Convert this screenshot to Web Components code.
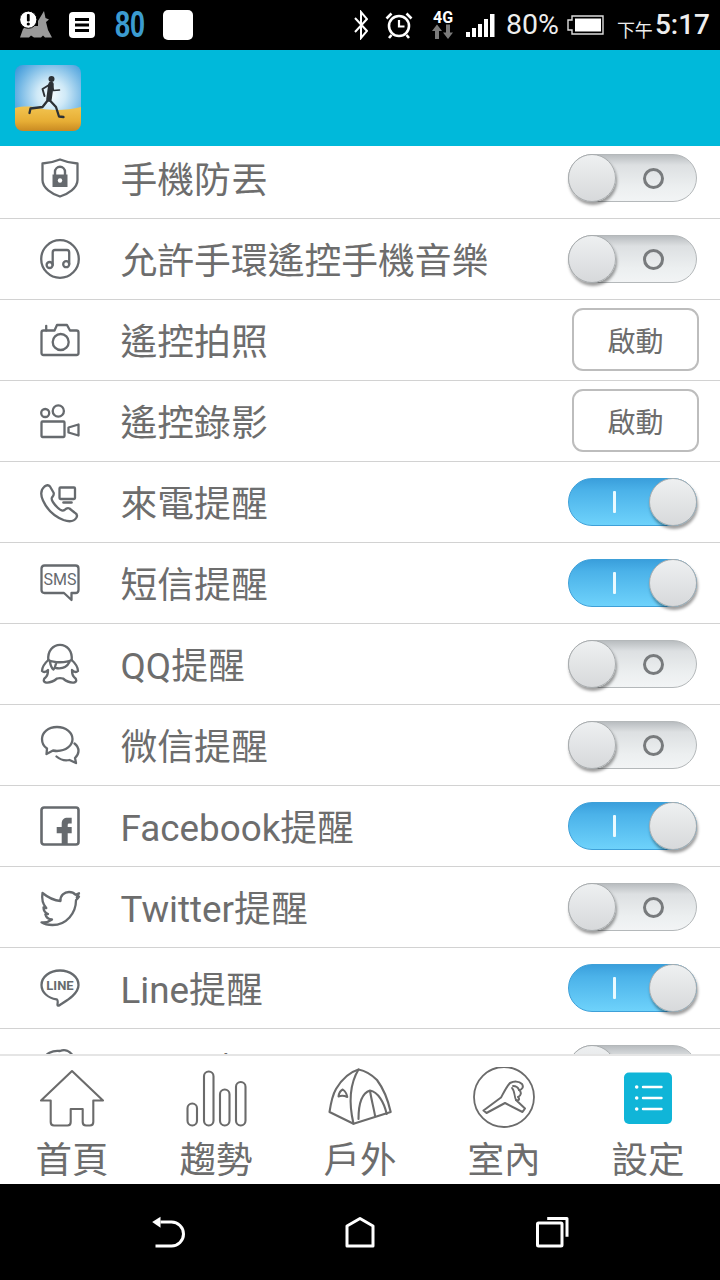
<!DOCTYPE html>
<html lang="zh-Hant">
<head>
<meta charset="utf-8">
<title>設定</title>
<style>
  html, body { margin: 0; padding: 0; background: #fff; }
  body {
    width: 720px;
    height: 1280px;
    overflow: hidden;
    display: flex;
    flex-direction: column;
    font-family: Roboto, "Noto Sans CJK TC", sans-serif;
    color: #6d6d6d;
  }
</style>
</head>
<body>
  <status-bar></status-bar>
  <app-bar></app-bar>
  <setting-list>
    <setting-row icon="shield" label="手機防丟"><toggle-switch></toggle-switch></setting-row>
    <setting-row icon="music" label="允許手環遙控手機音樂"><toggle-switch></toggle-switch></setting-row>
    <setting-row icon="camera" label="遙控拍照"><action-button>啟動</action-button></setting-row>
    <setting-row icon="video" label="遙控錄影"><action-button>啟動</action-button></setting-row>
    <setting-row icon="phone" label="來電提醒"><toggle-switch on></toggle-switch></setting-row>
    <setting-row icon="sms" label="短信提醒"><toggle-switch on></toggle-switch></setting-row>
    <setting-row icon="qq" label="QQ提醒"><toggle-switch></toggle-switch></setting-row>
    <setting-row icon="wechat" label="微信提醒"><toggle-switch></toggle-switch></setting-row>
    <setting-row icon="facebook" label="Facebook提醒"><toggle-switch on></toggle-switch></setting-row>
    <setting-row icon="twitter" label="Twitter提醒"><toggle-switch></toggle-switch></setting-row>
    <setting-row icon="line" label="Line提醒"><toggle-switch on></toggle-switch></setting-row>
    <setting-row icon="skype" label="Skype提醒"><toggle-switch></toggle-switch></setting-row>
  </setting-list>
  <tab-bar>
    <tab-item icon="home" label="首頁"></tab-item>
    <tab-item icon="trend" label="趨勢"></tab-item>
    <tab-item icon="tent" label="戶外"></tab-item>
    <tab-item icon="indoor" label="室內"></tab-item>
    <tab-item icon="settings" label="設定"></tab-item>
  </tab-bar>
  <nav-bar></nav-bar>

<script>
// row icons: 40x40 box, outline drawn with currentColor
const ROW_ICONS = {
  shield: `<path d="M20 1.5C26 4 32 5.2 37.5 5.5V22C37.5 30 28 36 20 38.5C12 36 2.5 30 2.5 22V5.5C8 5.2 14 4 20 1.5Z"/>
    <path d="M15 17v-3.2a5 5 0 0 1 10 0V17" stroke-width="2.4"/>
    <path d="M12.5 16.5h15v12.5h-15z" fill="currentColor" stroke="none"/>
    <circle cx="20" cy="22.5" r="2.2" fill="#fff" stroke="none"/>`,
  music: `<circle cx="20" cy="20" r="18.8"/>
    <path d="M12.7 26V13.5Q12.7 11 15 11H27Q29.2 11 29.2 13.5V25"/>
    <circle cx="9.6" cy="26" r="3"/><circle cx="26.2" cy="25.2" r="3"/>`,
  camera: `<path d="M3.5 10.5H14.5L17 5H27L30 10.5H36.5Q38.5 10.5 38.5 12.5V33Q38.5 35 36.5 35H3.5Q1.5 35 1.5 33V12.5Q1.5 10.5 3.5 10.5Z"/>
    <circle cx="20.7" cy="22" r="8"/><path d="M6.2 5.8V10.5"/>`,
  video: `<circle cx="5.2" cy="12" r="4"/><circle cx="18.3" cy="10" r="5.6"/>
    <rect x="1.5" y="20.5" width="23" height="15.5" rx="1"/><path d="M28.5 26.5L38.5 23.5V34.5L28.5 31.5Z"/>`,
  phone: `<path d="M4.5 4.5C1 7.5 .5 13 3 18.5C7 27.5 14.5 34.5 23.5 38C29 40 34 39.5 36.5 35.5C37.5 33.5 36.5 31.5 34.5 30.5L29.5 26.5C27.5 25.5 26.5 26 24.5 28C22.5 29.5 20.5 28.5 17.5 25.5C14 22 10.5 18 12 15.5C13.5 13.5 14.5 12.5 13.5 10.5L10 4.5C8.5 2.5 6.5 3 4.5 4.5Z"/>
    <rect x="19.5" y="5.5" width="15.5" height="11.5" rx="1"/><path d="M23.5 20.5H31.5" stroke-width="2.6"/>`,
  sms: `<path d="M4.5 2.5H35.5Q38.5 2.5 38.5 5.5V27Q38.5 30 35.5 30H31.5V37L24 30H4.5Q1.5 30 1.5 27V5.5Q1.5 2.5 4.5 2.5Z"/>
    <text x="20" y="22" text-anchor="middle" font-size="16" fill="currentColor" stroke="none" font-family="Roboto, sans-serif">SMS</text>`,
  qq: `<path d="M8.3 16C7.5 7 13 .8 20 .8C27 .8 32.5 7 31.7 16"/>
    <path d="M8.3 16C5 19 2 23 2 27C4 29 6 28 8 26C8 29 8 31 6 33C3 35 3 38 6 38.5C10 39 14 37 17 34.5C19 34 21 34 23 34.5C26 37 30 39 34 38.5C37 38 37 35 34 33C32 31 32 29 32 26C34 28 36 29 38 27C38 23 35 19 31.7 16"/>
    <path d="M8.3 16C14 19 26 19 31.7 16M10 18C10.5 21 11.5 24 13.5 25.5C15 24 15.5 22 16 19.5M29.5 18C27 23 22 25 16 24"/>`,
  wechat: `<path d="M17 2C8 2 2 7.5 2 14C2 18 4 21.5 7 23.5L6.5 29L13 25.5C14 25.7 15.5 26 17 26C26 26 32.5 20.5 32.5 14C32.5 7.5 26 2 17 2Z"/>
    <path d="M34.5 18.5C37 20.5 38.5 23 38.5 26C38.5 29 37 31 35 33L36 38L29.5 35C25 36 20 34.5 16.5 31.5"/>`,
  facebook: `<rect x="1.5" y="1.5" width="37" height="37" rx="2.5" stroke-width="2.6"/>
    <path d="M21.7 38V17.5C21.7 13.5 24 11.7 27.5 11.7H31.7V17.5H29.5C28 17.5 27.7 18 27.7 19.5V21H31.7V27.3H27.7V38ZM16.7 21H22V27.3H16.7Z" fill="currentColor" stroke="none"/>`,
  twitter: `<path d="M2.5 6C8 10.5 14 13.5 20.5 14C20 8.5 24.5 5 29 5C32 5 34 6 35.5 7.8L39 6.2L36.8 10.2L39 9.7C38 11.2 37 12.3 36 13.2C36 26 26.5 38 12.5 38C8.5 38 4.5 37.3 1.5 35.3C5 35.7 9 34.8 12 32.5C8.5 32.3 6 30.3 5.3 27.3L8 27C5.5 26 3.5 23.5 3.5 20.5L6.3 21C3.5 18 1.5 12 2.5 6Z"/>`,
  line: `<path d="M20 2.5C9.5 2.5 1.5 9 1.5 17C1.5 24.5 8 30 16.5 31.3C18 31.6 18 33 17.5 36.5C17.4 37.8 18.3 38 19.5 37.2C25 33.5 38.5 26.5 38.5 17C38.5 9 30.5 2.5 20 2.5Z"/>
    <text x="20" y="21.5" text-anchor="middle" font-size="13" font-weight="700" fill="currentColor" stroke="none" font-family="Roboto, sans-serif">LINE</text>`,
  skype: `<path d="M2 13C5 4 13 1 20 2C25 0 30 2 33 7C37 11 38 16 37 22"/>`
};

// tab icons are drawn in page coordinates, the viewBox picks the window
const TAB_ICONS = {
  home: `<svg viewBox="32 1067 80 62"><path d="M72 1071L41 1100.5H50.7V1122Q50.7 1125.5 54 1125.5H67.5Q70.7 1125.5 70.7 1122V1109H82.7V1122Q82.7 1125.5 86 1125.5H90Q93.3 1125.5 93.3 1122V1100.5H103Z"/></svg>`,
  trend: `<svg viewBox="176 1067 80 62"><rect x="187.5" y="1103.5" width="9.5" height="22" rx="4.7"/><rect x="204" y="1071.5" width="9.5" height="54" rx="4.7"/><rect x="220" y="1089.5" width="9.5" height="36" rx="4.7"/><rect x="236" y="1082" width="9.5" height="43.5" rx="4.7"/></svg>`,
  tent: `<svg viewBox="320 1067 80 62"><path d="M329.5 1112C331 1102 332.5 1095 336 1089C342 1079 350 1072 358.5 1069.5C366 1071 372 1075 377 1080C383 1088 388 1100 390.7 1112L353.5 1123.7Z"/>
    <path d="M358.5 1069.5C351 1082 348 1100 353.5 1123.7M358.5 1119C358.5 1104 362 1093 370 1090.5C378 1092 384 1102 386.7 1114M370 1090.5C371 1098 373.5 1107 375 1115.5"/>
    <path d="M338.5 1096.5C339 1093 340.5 1090.5 342.7 1089.5C345 1091 346.8 1094 347.3 1097C344 1095.5 341 1095.5 338.5 1096.5Z" stroke-width="2"/></svg>`,
  indoor: `<svg viewBox="464 1067 80 62"><circle cx="504" cy="1097" r="30" stroke-width="1.8"/>
    <path d="M483.5 1110.5L501 1097.5C504 1092 507 1086 510 1083C514 1081 519 1081 522 1084C524 1087 522 1090 519 1090C522 1092 521 1096 518 1097C520 1099 519 1101 516 1100L525 1108.5L522.5 1112L505 1103L486.5 1113Z" stroke-width="2"/>
    <path d="M512 1088C515 1091 514 1096 516 1100M513 1086C516 1086 518 1087 519 1090" stroke-width="1.8"/></svg>`,
  settings: `<svg viewBox="608 1067 80 62"><rect x="624" y="1072.5" width="48" height="51.5" rx="5" fill="#10b5d8" stroke="none"/>
    <g fill="#fff" stroke="none"><circle cx="636.7" cy="1087" r="1.8"/><circle cx="636.7" cy="1098" r="1.8"/><circle cx="636.7" cy="1109" r="1.8"/></g>
    <path d="M643 1087H661.5M643 1098H661.5M643 1109H661.5" stroke="#fff" stroke-width="2.4"/></svg>`
};

class StatusBar extends HTMLElement {
  constructor() {
    super();
    this.attachShadow({ mode: 'open' });
    this.shadowRoot.innerHTML = `
      <style>
        :host { display: flex; align-items: center; flex: none; height: 50px; background: #000; color: #fff; padding: 0 10px 0 20px; box-sizing: border-box; font-family: Roboto, "Noto Sans CJK TC", sans-serif; }
        svg { display: block; flex: none; }
        .count { margin-left: 20px; width: 30px; font: 700 37px/50px "Liberation Sans", sans-serif; color: #3b9bd0; letter-spacing: 0; transform: scaleX(.73); transform-origin: left center; white-space: nowrap; }
        .square { margin-left: 18px; width: 30px; height: 30px; background: #fff; border-radius: 5px; flex: none; }
        .right { margin-left: auto; display: flex; align-items: center; height: 50px; }
        .pct { margin-left: 11px; font-size: 28.5px; line-height: 50px; color: #eee; }
        .ampm { margin-left: 13px; font-size: 18px; line-height: 50px; padding-top: 6px; color: #eee; box-sizing: border-box; height: 50px; }
        .time { margin-left: 2px; font-size: 28px; font-weight: 500; line-height: 50px; color: #eee; }
      </style>
      <svg width="32" height="32" viewBox="20 10 32 32">
        <path d="M20 38.5L23 30L26 27H38V22L44 12L45.5 19L49 20.5L46 23L48 31L52 38.5H45L43 36.5L41 38.5H34L31 36.5L29 38.5Z" fill="#9a9a9a"/>
        <circle cx="28.3" cy="20.7" r="8.6" fill="#fff" stroke="#000" stroke-width="1"/>
        <rect x="26.9" y="15" width="2.8" height="7.5" rx="1" fill="#000"/><circle cx="28.3" cy="25" r="1.6" fill="#000"/>
      </svg>
      <svg style="margin-left:17px" width="26" height="26" viewBox="0 0 26 26">
        <rect width="26" height="26" rx="4" fill="#fff"/>
        <path d="M6 7.5H20M6 13H20M6 18.5H20" stroke="#000" stroke-width="3"/>
      </svg>
      <div class="count">80</div>
      <div class="square"></div>
      <div class="right">
        <svg width="14" height="30" viewBox="0 0 14 30" fill="none" stroke="#fff" stroke-width="2"><path d="M1 8L13 21L7 28V2L13 9L1 22"/></svg>
        <svg style="margin-left:17px" width="28" height="28" viewBox="0 0 28 28" fill="none" stroke="#fff" stroke-width="2.6">
          <circle cx="14" cy="15" r="10"/><path d="M14 9V15.5H19.5" stroke-width="2.2"/><path d="M1.5 7.5L6.5 2.5M21.5 2.5L26.5 7.5M6.5 24L4 27M21.5 24L24 27"/>
        </svg>
        <svg style="margin-left:18px" width="24" height="30" viewBox="0 0 24 30">
          <text x="12" y="12.5" text-anchor="middle" font-size="16" font-weight="700" fill="#fff" font-family="Roboto, sans-serif">4G</text>
          <path d="M6 14.5L1 21H4V29H8V21H11ZM17 29L22 22.5H19V14.5H15V22.5H12Z" fill="#7a7a7a"/>
        </svg>
        <svg style="margin-left:11px" width="29" height="23" viewBox="0 0 29 23" fill="#fff">
          <rect x="0" y="18" width="4" height="5"/><rect x="6" y="14" width="4" height="9"/><rect x="12" y="10" width="4" height="13"/><rect x="18" y="5" width="4" height="18"/><rect x="24" y="0" width="4.5" height="23"/>
        </svg>
        <span class="pct">80%</span>
        <svg style="margin-left:8px" width="37" height="20" viewBox="0 0 37 20" fill="none">
          <path d="M5 1H36V19H5V15H1V5H5Z" stroke="#ddd" stroke-width="1.4"/><rect x="8" y="3.5" width="26" height="13" fill="#fff"/>
        </svg>
        <span class="ampm">下午</span>
        <span class="time">5:17</span>
      </div>
    `;
  }
}

class AppBar extends HTMLElement {
  constructor() {
    super();
    this.attachShadow({ mode: 'open' });
    this.shadowRoot.innerHTML = `
      <style>
        :host { display: flex; align-items: center; flex: none; height: 96px; padding-left: 15px; box-sizing: border-box; background: #00b9da; }
        svg { display: block; border-radius: 8px; }
      </style>
      <svg width="66" height="66" viewBox="0 0 66 66">
        <defs>
          <radialGradient id="sky" cx=".55" cy=".45" r=".72">
            <stop offset="0" stop-color="#f6fcff"/><stop offset=".3" stop-color="#cfe9f7"/><stop offset=".7" stop-color="#6fb5e4"/><stop offset="1" stop-color="#2f8fd6"/>
          </radialGradient>
          <linearGradient id="sand" x1="0" y1="0" x2="0" y2="1">
            <stop offset="0" stop-color="#f2c450"/><stop offset=".6" stop-color="#e7ae35"/><stop offset="1" stop-color="#c98a22"/>
          </linearGradient>
        </defs>
        <rect width="66" height="66" fill="url(#sky)"/>
        <path d="M0 43C8 41 18 41 26 43.5C38 46 54 45 66 42V66H0Z" fill="url(#sand)"/>
        <circle cx="36.5" cy="14" r="3" fill="#2c3136"/>
        <path d="M36 19.5L34 34" stroke="#2c3136" stroke-width="5.5" stroke-linecap="round"/>
        <g fill="none" stroke="#2c3136" stroke-linecap="round" stroke-linejoin="round">
          <path d="M34 20L27.5 24L29.5 31" stroke-width="1.9"/>
          <path d="M37.5 21L38.5 25.5L44.5 25" stroke-width="1.6"/>
          <path d="M33 35L27.5 42L15.5 43.5L14.5 48" stroke-width="2.3"/>
          <path d="M34.5 35L41 42L44 51.5L48.5 52" stroke-width="2.3"/>
        </g>
      </svg>
    `;
  }
}

class SettingList extends HTMLElement {
  constructor() {
    super();
    this.attachShadow({ mode: 'open' });
    // the list is scrolled by 8px in the screenshot
    this.shadowRoot.innerHTML = `
      <style>
        :host { display: block; flex: none; height: 908px; overflow: hidden; background: #fff; }
        .scroller { margin-top: -8px; }
      </style>
      <div class="scroller"><slot></slot></div>
    `;
  }
}

class SettingRow extends HTMLElement {
  constructor() {
    super();
    this.attachShadow({ mode: 'open' });
    this.shadowRoot.innerHTML = `
      <style>
        :host { display: flex; align-items: center; height: 81px; box-sizing: border-box; border-bottom: 1px solid #d2d2d2; padding: 0 23px 0 40px; overflow: hidden; }
        svg { display: block; flex: none; overflow: visible; fill: none; stroke: currentColor; stroke-width: 2.3; stroke-linejoin: round; stroke-linecap: round; color: #666a6e; }
        .label { margin-left: 40.5px; padding-top: 6px; flex: 1; font: 400 36.8px/50px Roboto, "Noto Sans CJK TC", sans-serif; color: #6d6d6d; white-space: nowrap; }
      </style>
      <svg width="40" height="40" viewBox="0 0 40 40">${ROW_ICONS[this.getAttribute('icon')] || ''}</svg>
      <span class="label">${this.getAttribute('label') || ''}</span>
      <slot></slot>
    `;
  }
}

class ToggleSwitch extends HTMLElement {
  constructor() {
    super();
    this.attachShadow({ mode: 'open' });
    this.shadowRoot.innerHTML = `
      <style>
        :host { display: flex; align-items: center; flex: none; position: relative; width: 129px; height: 48px; box-sizing: border-box; border-radius: 24px; border: 1px solid #b4b8ba; background: linear-gradient(#b9bdc0 0, #dde0e2 22%, #ecEFF0 70%, #f2f4f5 100%); }
        :host([on]) { border-color: #3ea0d8; background: linear-gradient(#3a9fdc 0, #4bb2e9 25%, #6ed2fb 100%); justify-content: flex-start; }
        .mark { box-sizing: border-box; width: 21px; height: 21px; margin-left: 74px; border: 3px solid #787b7d; border-radius: 50%; }
        :host([on]) .mark { width: 3px; height: 22px; margin-left: 44px; border: 0; border-radius: 1px; background: #eafaff; }
        .knob { position: absolute; left: -1px; top: -1px; width: 48px; height: 48px; box-sizing: border-box; border-radius: 50%; border: 1px solid #a9adaf; background: linear-gradient(#eef0f1, #d7d9db); box-shadow: 1px 3px 3px rgba(0,0,0,.38); }
        :host([on]) .knob { left: auto; right: -1px; }
      </style>
      <span class="mark"></span>
      <span class="knob"></span>
    `;
  }
}

class ActionButton extends HTMLElement {
  constructor() {
    super();
    this.attachShadow({ mode: 'open' });
    this.shadowRoot.innerHTML = `
      <style>
        :host { display: flex; align-items: center; justify-content: center; flex: none; width: 127px; height: 63px; margin: 0 -2px 2px 0; padding-top: 2px; box-sizing: border-box; border: 2px solid #bdbdbd; border-radius: 11px; background: #fff; font: 400 28px/1 "Noto Sans CJK TC", sans-serif; color: #6d6d6d; }
      </style>
      <slot></slot>
    `;
  }
}

class TabBar extends HTMLElement {
  constructor() {
    super();
    this.attachShadow({ mode: 'open' });
    this.shadowRoot.innerHTML = `
      <style>
        :host { display: grid; grid-template-columns: repeat(5, 144px); flex: none; height: 130px; box-sizing: border-box; border-top: 2px solid #e5e5e5; background: #fff; overflow: hidden; }
      </style>
      <slot></slot>
    `;
  }
}

class TabItem extends HTMLElement {
  constructor() {
    super();
    this.attachShadow({ mode: 'open' });
    this.shadowRoot.innerHTML = `
      <style>
        :host { display: flex; flex-direction: column; align-items: center; padding-top: 11px; }
        svg { display: block; width: 80px; height: 62px; margin-bottom: 4px; fill: none; stroke: #6b6b6b; stroke-width: 2.1; stroke-linejoin: round; stroke-linecap: round; }
        .label { font: 400 36.5px/50px "Noto Sans CJK TC", sans-serif; color: #6d6d6d; white-space: nowrap; }
      </style>
      ${TAB_ICONS[this.getAttribute('icon')] || ''}
      <span class="label">${this.getAttribute('label') || ''}</span>
    `;
  }
}

class NavBar extends HTMLElement {
  constructor() {
    super();
    this.attachShadow({ mode: 'open' });
    this.shadowRoot.innerHTML = `
      <style>
        :host { display: flex; align-items: center; justify-content: center; gap: 152.5px; flex: none; height: 96px; background: #000; }
        svg { display: block; flex: none; width: 40px; height: 40px; fill: none; stroke: #fff; stroke-width: 3; stroke-linejoin: round; }
      </style>
      <svg viewBox="147.5 1212 40 40"><path d="M160 1222H171A12 12 0 0 1 171 1246H155"/><path d="M151.7 1222L160 1216.7V1227.7Z" fill="#fff" stroke="none"/></svg>
      <svg viewBox="340 1212 40 40"><path d="M360 1218.5L373 1226V1246H347V1226Z"/></svg>
      <svg viewBox="532.5 1212 40 40"><rect x="537" y="1223" width="24.5" height="23" rx="1"/><path d="M546.7 1218.5H566.5V1236.7"/></svg>
    `;
  }
}

customElements.define('status-bar', StatusBar);
customElements.define('app-bar', AppBar);
customElements.define('setting-list', SettingList);
customElements.define('setting-row', SettingRow);
customElements.define('toggle-switch', ToggleSwitch);
customElements.define('action-button', ActionButton);
customElements.define('tab-bar', TabBar);
customElements.define('tab-item', TabItem);
customElements.define('nav-bar', NavBar);
</script>
</body>
</html>
